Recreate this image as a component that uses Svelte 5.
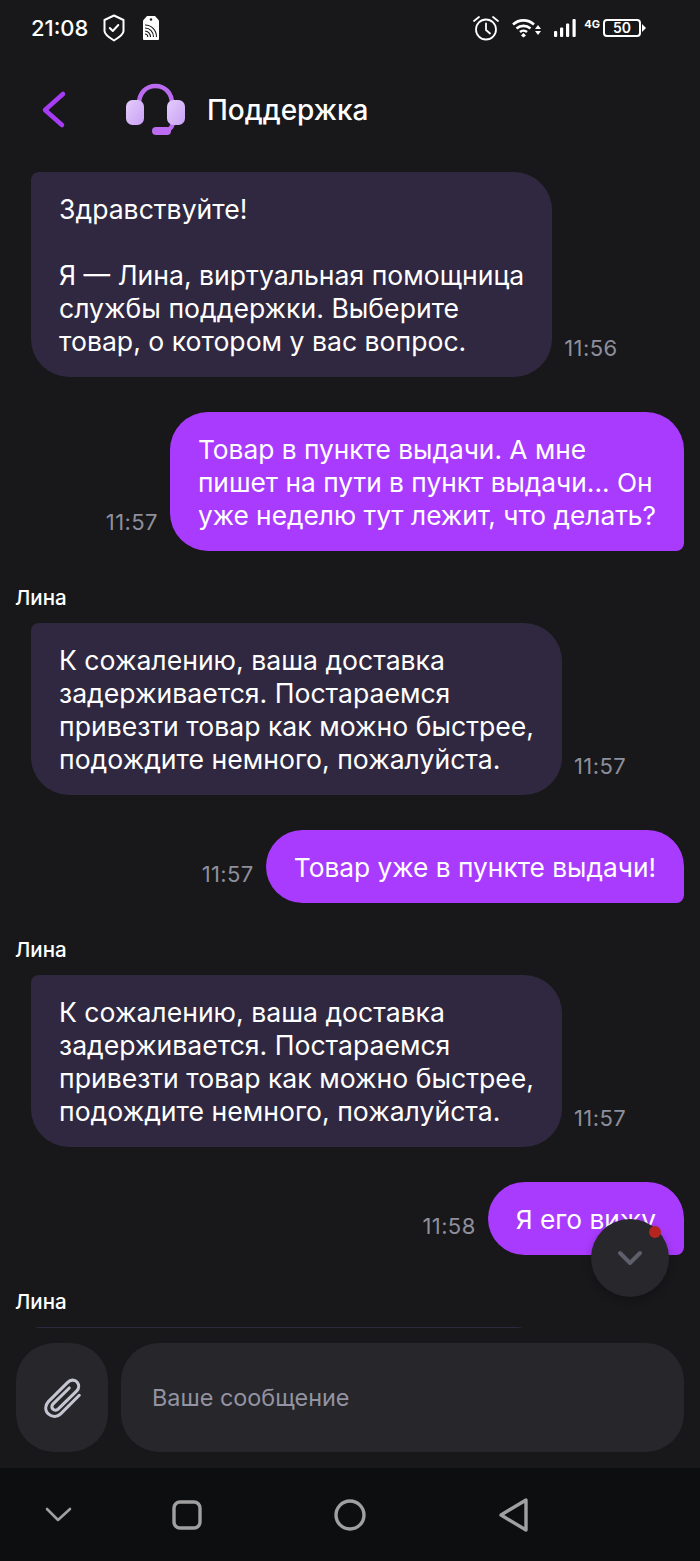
<script>
  const messages = [
    { mine: false, time: '11:56', lines: ['Здравствуйте!', '', 'Я — Лина, виртуальная помощница', 'службы поддержки. Выберите', 'товар, о котором у вас вопрос.'] },
    { mine: true, time: '11:57', lines: ['Товар в пункте выдачи. А мне', 'пишет на пути в пункт выдачи... Он', 'уже неделю тут лежит, что делать?'] },
    { mine: false, name: 'Лина', time: '11:57', lines: ['К сожалению, ваша доставка', 'задерживается. Постараемся', 'привезти товар как можно быстрее,', 'подождите немного, пожалуйста.'] },
    { mine: true, time: '11:57', lines: ['Товар уже в пункте выдачи!'] },
    { mine: false, name: 'Лина', time: '11:57', lines: ['К сожалению, ваша доставка', 'задерживается. Постараемся', 'привезти товар как можно быстрее,', 'подождите немного, пожалуйста.'] },
    { mine: true, time: '11:58', lines: ['Я его вижу'] }
  ];
</script>

<div class="page">
  <div class="status">
    <span class="clock">21:08</span>
    <svg class="shield" width="22" height="28" viewBox="0 0 22 28" fill="none" stroke="#fff" stroke-width="2" stroke-linejoin="round" stroke-linecap="round">
      <path d="M11 1.500 20.500 6v11c0 3-4.500 6.500-9.500 9.500C6 23.500 1.500 20 1.500 17V6z" />
      <path d="M6.800 14l3 3 5.500-6" />
    </svg>
    <svg class="tag" width="18" height="26" viewBox="0 0 18 26">
      <path fill="#fff" d="M5 1h8l4 4.500V24a1 1 0 0 1-1 1H2a1 1 0 0 1-1-1V5.500z" />
      <circle cx="9" cy="4.500" r="1.200" fill="#18181b" />
      <g fill="none" stroke="#18181b" stroke-width="1.100">
        <path d="M3 10c6.500 0 11.500 5 11.500 12" />
        <path d="M3 13c5 0 8.500 4 8.500 9" />
        <path d="M3 16c3.200 0 5.500 2.800 5.500 6" />
        <path d="M3 19c1.700 0 2.800 1.400 2.800 3" />
      </g>
    </svg>
    <div class="status-right">
      <svg width="28" height="26" viewBox="0 0 28 26" fill="none" stroke="#fff" stroke-width="1.800" stroke-linecap="round">
        <circle cx="14" cy="14.500" r="10" />
        <path d="M14 8.500v6.500l4 3.500" />
        <path d="M2 6l5-4M26 6l-5-4" />
      </svg>
      <svg class="wifi" width="30" height="20" viewBox="0 0 30 20">
        <g fill="none" stroke="#fff" stroke-width="2.600">
          <path d="M1 6.500C7 1 16 1 22 6.500" />
          <path d="M4.500 10.500c4-3.500 10-3.500 14 0" />
          <path d="M8 14c2-1.700 5-1.700 7 0" />
        </g>
        <path fill="#fff" d="M11.500 15l2.500 2.500-2.500 2-2.500-2zM26 7l3 4h-6zM26 17l-3-4h6z" />
      </svg>
      <svg class="bars" width="22" height="20" viewBox="0 0 22 20" fill="#fff">
        <rect x="0" y="13" width="3.200" height="6" rx="1" />
        <rect x="6" y="9.500" width="3.200" height="9.500" rx="1" />
        <rect x="12" y="5.500" width="3.200" height="13.500" rx="1" />
        <rect x="18.500" y="1" width="3.200" height="18" rx="1" />
      </svg>
      <div class="net-batt">
        <span class="net">4G</span>
        <span class="batt"><span>50</span></span>
        <span class="nub"></span>
      </div>
    </div>
  </div>

  <header>
    <svg class="back" width="28" height="40" viewBox="0 0 28 40" fill="none" stroke="#a63cf5" stroke-width="4.500" stroke-linecap="round" stroke-linejoin="round">
      <path d="M23 4 5 20l17 15" />
    </svg>
    <svg class="headset" width="60" height="56" viewBox="0 0 60 56">
      <defs>
        <linearGradient id="cup" x1="0" y1="0" x2="1" y2="1">
          <stop offset="0" stop-color="#e4cdfb" />
          <stop offset="1" stop-color="#c9a0f5" />
        </linearGradient>
      </defs>
      <path fill="none" stroke="#bb6bf0" stroke-width="4.500" d="M13 22C13 11 20 4 29.500 4S46 11 46 22" />
      <path fill="none" stroke="#bb6bf0" stroke-width="4.500" d="M47 41c-1 5-5 9-12 9" />
      <rect x="26" y="45" width="19" height="8" rx="4" fill="#bb6bf0" />
      <rect x="0" y="18" width="18" height="25" rx="6.500" fill="url(#cup)" />
      <rect x="41" y="18" width="18" height="25" rx="6.500" fill="url(#cup)" />
    </svg>
    <h1>Поддержка</h1>
  </header>

  <main>
    {#each messages as m}
      {#if m.name}<div class="name">{m.name}</div>{/if}
      <div class="row" class:mine={m.mine}>
        <div class="bubble">
          {#each m.lines as line}
            <div class="line">{line}</div>
          {/each}
        </div>
        <time>{m.time}</time>
      </div>
    {/each}
    <div class="name">Лина</div>
    <div class="row"><div class="bubble pending"></div></div>
  </main>

  <button class="scroll" aria-label="Вниз">
    <svg width="26" height="16" viewBox="0 0 26 16" fill="none" stroke="#5f5f6b" stroke-width="4" stroke-linecap="round" stroke-linejoin="round">
      <path d="M3 3l10 10L23 3" />
    </svg>
    <span class="dot"></span>
  </button>

  <div class="composer">
    <button class="attach" aria-label="Прикрепить">
      <svg width="40" height="42" viewBox="0 0 44 46" fill="none" stroke="#c6c6d2" stroke-width="3.400" stroke-linecap="round" stroke-linejoin="round">
        <path d="M41 20 20.500 40.500c-3.500 3.500-9 4-13.500 0-4-4-3.500-9.500 0-13.500L28 6c3.500-3.500 8-3.500 10.500-.5s2.500 7-.5 10L18 35c-1.800 1.800-4.500 1.800-6 .3s-1.600-4 .2-5.800L30 12" />
      </svg>
    </button>
    <div class="input">Ваше сообщение</div>
  </div>

  <nav>
    <svg width="28" height="18" viewBox="0 0 28 18" fill="none" stroke="#a0a0a0" stroke-width="2.600" stroke-linecap="round" stroke-linejoin="round">
      <path d="M2 3l11 11L25 3" />
    </svg>
    <svg class="square" width="30" height="30" viewBox="0 0 30 30" fill="none" stroke="#a0a0a0" stroke-width="3.400">
      <rect x="2" y="2" width="26" height="26" rx="6" />
    </svg>
    <svg class="circle" width="32" height="32" viewBox="0 0 32 32" fill="none" stroke="#a0a0a0" stroke-width="3.400">
      <circle cx="16" cy="16" r="14" />
    </svg>
    <svg class="triangle" width="30" height="34" viewBox="0 0 30 34" fill="none" stroke="#a0a0a0" stroke-width="3.400" stroke-linejoin="round">
      <path d="M27 2v30L2 17z" />
    </svg>
  </nav>
</div>

<style>
  :global(body) {
    margin: 0;
    background: #18181b;
    font-family: Inter, 'Noto Sans', sans-serif;
  }

  .page {
    position: relative;
    width: 700px;
    height: 1561px;
    display: flex;
    flex-direction: column;
    background: #18181b;
    color: #fff;
    overflow: hidden;
  }

  .status {
    height: 55px;
    flex: none;
    display: flex;
    align-items: center;
    padding: 0 54px 0 31px;
    box-sizing: border-box;
  }

  .clock {
    font-size: 22px;
    font-weight: 500;
    width: 72px;
  }

  .tag {
    margin-left: 17px;
  }

  .status-right {
    margin-left: auto;
    display: flex;
    align-items: center;
    gap: 12px;
  }

  .net-batt {
    display: flex;
    align-items: center;
    margin-left: -4px;
  }

  .net {
    font-size: 11px;
    font-weight: 700;
    align-self: flex-start;
    margin: -2px 3px 0 0;
  }

  .batt {
    display: flex;
    align-items: center;
    justify-content: center;
    width: 38px;
    height: 18px;
    box-sizing: border-box;
    border: 2px solid #fff;
    border-radius: 4px;
    font-size: 14px;
    font-weight: 600;
  }

  .nub {
    width: 0;
    height: 0;
    margin-left: 1px;
    border-left: 4px solid #fff;
    border-top: 4px solid transparent;
    border-bottom: 4px solid transparent;
  }

  header {
    height: 110px;
    flex: none;
    display: flex;
    align-items: center;
    padding-left: 40px;
    box-sizing: border-box;
  }

  .headset {
    margin-left: 58px;
  }

  h1 {
    margin: 0 0 0 21px;
    font-size: 28px;
    font-weight: 500;
  }

  main {
    flex: 1;
    min-height: 0;
    overflow: hidden;
    padding: 7px 16px 0;
    display: flex;
    flex-direction: column;
    font-size: 26.6px;
  }

  .name {
    margin: 0 0 14px -1px;
    font-size: 20.5px;
    line-height: 23px;
    font-weight: 500;
  }

  .row {
    display: flex;
    align-items: flex-end;
    gap: 12px;
    margin-left: 15px;
    margin-bottom: 35px;
    flex: none;
  }

  .row.mine {
    margin-left: 0;
    flex-direction: row-reverse;
    font-size: 26.3px;
  }

  .bubble {
    padding: 21px 28px 19px;
    background: #302840;
    border-radius: 8px 38px 38px 38px;
    white-space: nowrap;
  }

  .mine .bubble {
    background: #a93bff;
    border-radius: 38px 38px 8px 38px;
  }

  .pending {
    width: 466px;
    height: 60px;
  }

  .line {
    line-height: 33px;
    min-height: 33px;
  }

  time {
    margin-bottom: 18px;
    font-size: 22px;
    line-height: 22px;
    letter-spacing: 0.4px;
    color: #8f8f9b;
  }

  .scroll {
    position: absolute;
    left: 591px;
    top: 1219px;
    width: 78px;
    height: 78px;
    padding: 0;
    border: none;
    border-radius: 50%;
    background: #27272c;
    box-shadow: 0 3px 8px rgba(0, 0, 0, 0.25);
    display: flex;
    align-items: center;
    justify-content: center;
  }

  .dot {
    position: absolute;
    left: 58px;
    top: 7px;
    width: 12px;
    height: 12px;
    border-radius: 50%;
    background: #b5241f;
  }

  .composer {
    flex: none;
    display: flex;
    gap: 13px;
    padding: 15px 16px 16px;
    background: #18181b;
  }

  .attach {
    width: 92px;
    height: 109px;
    padding: 0;
    flex: none;
    border: none;
    border-radius: 38px;
    background: #26262b;
    display: flex;
    align-items: center;
    justify-content: center;
  }

  .input {
    flex: 1;
    height: 109px;
    display: flex;
    align-items: center;
    padding-left: 31px;
    box-sizing: border-box;
    border-radius: 38px;
    background: #26262b;
    color: #9393a2;
    font-size: 23.4px;
  }

  nav {
    height: 93px;
    flex: none;
    display: flex;
    align-items: center;
    padding-left: 45px;
    box-sizing: border-box;
    background: #0d0e10;
  }

  .square {
    margin-left: 99px;
  }

  .circle {
    margin-left: 132px;
  }

  .triangle {
    margin-left: 133px;
  }
</style>
